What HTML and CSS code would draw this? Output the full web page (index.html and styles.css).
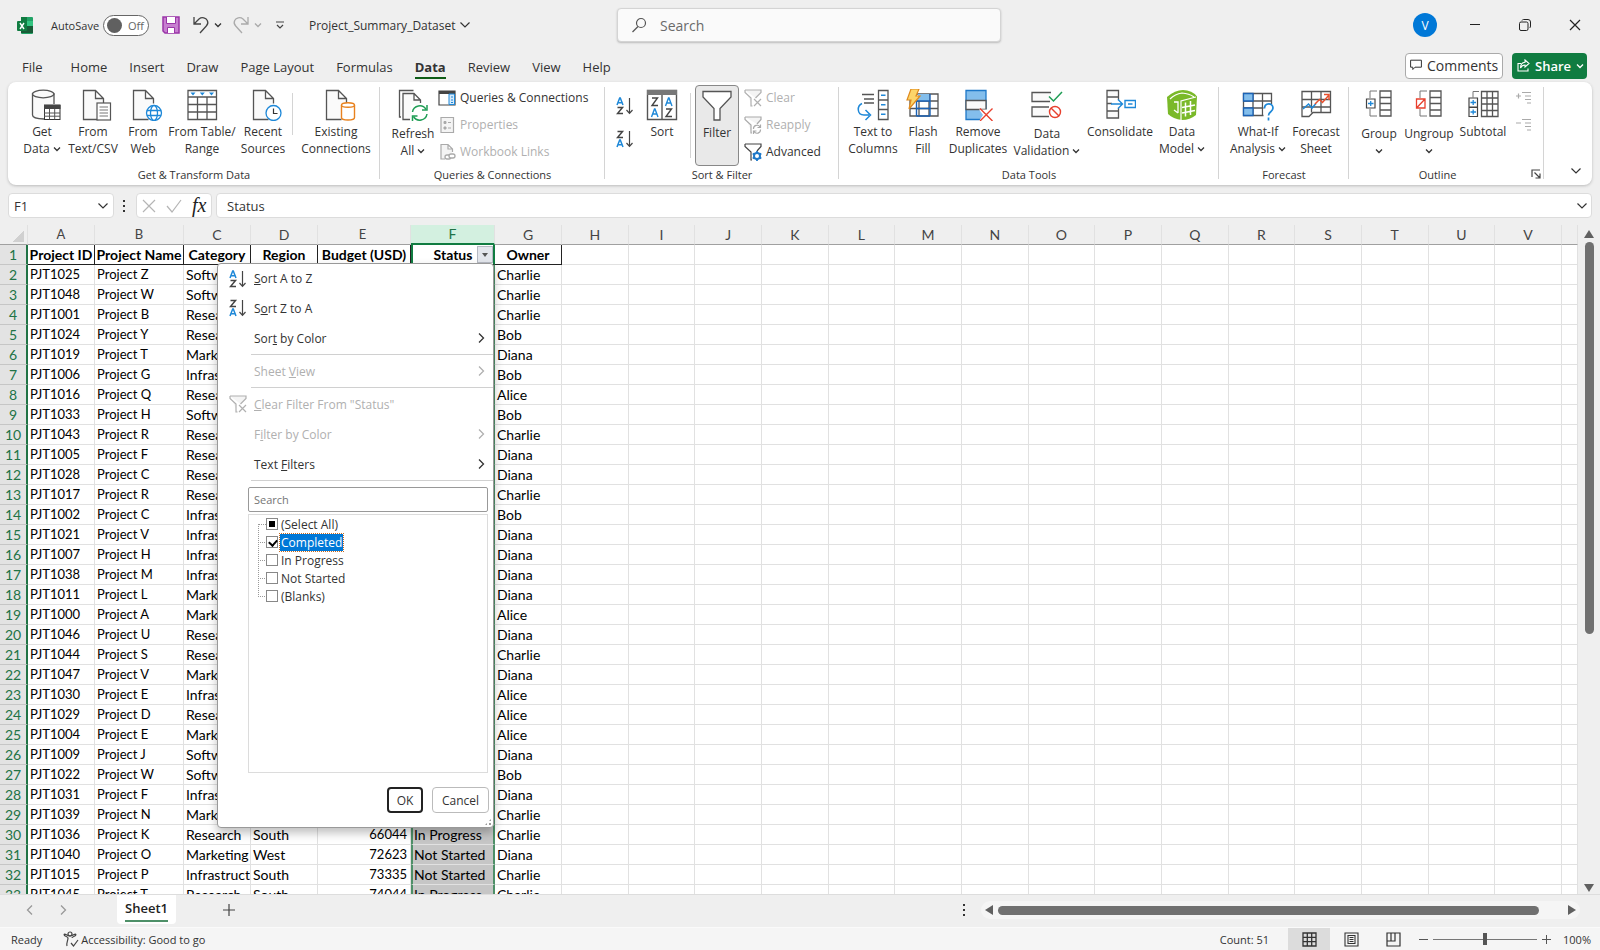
FILE: index.html
```
<!DOCTYPE html>
<html lang="en">
	<head>
		<meta charset="utf-8">
		<title>Project_Summary_Dataset</title>
		<link rel="stylesheet" href="styles.css">
	</head>
	<body>
		<svg class="defs" width="0" height="0">
			<symbol id="down" viewBox="0 0 8 8"><path d="M1 2.5l3 3 3-3" fill="none" stroke="currentColor" stroke-width="1.3"/></symbol>
			<symbol id="bigdown" viewBox="0 0 12 12"><path d="M1.5 3.5L6 8l4.5-4.5" fill="none" stroke="currentColor" stroke-width="1.2"/></symbol>
			<symbol id="right" viewBox="0 0 12 12"><path d="M4 1.5L8.5 6 4 10.5" fill="none" stroke="currentColor" stroke-width="1.3"/></symbol>
			<symbol id="az" viewBox="0 0 18 18"><g fill="none" stroke-width="1.5"><path d="M1 8L3.7 1h.6L7 8M2 5.7h4" stroke="#1e88d8"/><path d="M1.5 10.5H6.500L1.5 16.500H7" stroke="#444"/><path d="M13.5 1v15M10.5 13l3 3.3 3-3.3" stroke="#444" stroke-width="1.2"/></g></symbol>
			<symbol id="za" viewBox="0 0 18 18"><g fill="none" stroke-width="1.5"><path d="M1 17l2.7-7h.6L7 17M2 14.700h4" stroke="#1e88d8"/><path d="M1.5 1.5H6.500L1.5 7.5H7" stroke="#444"/><path d="M13.5 1v15M10.5 13l3 3.3 3-3.3" stroke="#444" stroke-width="1.2"/></g></symbol>
			<symbol id="unfilter" viewBox="0 0 18 18"><g fill="#f4f4f4" stroke="#b0b0b0" stroke-width="1.2"><path d="M1 1h16v2.5L11.5 9M8.5 17H7V9L1 3.5V1" /><path d="M10 10l7 7M17 10l-7 7"/></g></symbol>
			<symbol id="page" viewBox="0 0 32 32"><path d="M17.5 30.5h-15v-29h12l8 8v5M14.5 1.5v8h8" fill="#fafafa" stroke="#555" stroke-width="1.3"/></symbol>
		</svg>

		<header class="titlebar">
			<svg class="logo" width="16" height="17" viewBox="0 0 16 17"><rect x="4" width="12" height="17" rx="1" fill="#21a366"/><path d="M4 0h6v5H4z" fill="#107c41"/><path d="M10 4h6v5h-6z" fill="#33c481"/><path d="M4 9h12v7H4z" fill="#185c37"/><rect y="4" width="10" height="10" rx="1" fill="#107c41"/><path d="M3 6l4 6M7 6l-4 6" stroke="#fff" stroke-width="1.4"/></svg>
			<label class="autosave" for="autosave">AutoSave</label>
			<span class="toggle"><input type="checkbox" id="autosave"><span>Off</span></span>
			<button class="tool save" aria-label="Save"><svg width="18" height="18" viewBox="0 0 18 18"><path d="M1 1h16v16H3l-2-2z" fill="#c77fd0" stroke="#9a35a8" stroke-width="1.5"/><path d="M4.5 1v6.5h9V1" fill="#fff" stroke="#9a35a8"/><path d="M5.5 17v-5.5h7V17" fill="#fff" stroke="#9a35a8"/></svg></button>
			<button class="tool undo" aria-label="Undo"><svg width="18" height="18" viewBox="0 0 18 18"><path d="M2 1v7h7M2 8l5-5c3-2.5 7-1 8.3 1.5 1 2 .5 4-1 5.5L8 17" fill="none" stroke="#444" stroke-width="1.3"/></svg></button>
			<svg class="caret" width="8" height="8"><use href="#down"/></svg>
			<button class="tool redo" aria-label="Redo" disabled><svg width="18" height="18" viewBox="0 0 18 18"><path d="M16 1v7H9M16 8l-5-5C8 .5 4 2 2.7 4.500c-1 2-.5 4 1 5.5L10 17" fill="none" stroke="#aaa" stroke-width="1.3"/></svg></button>
			<svg class="caret dim" width="8" height="8"><use href="#down"/></svg>
			<button class="tool customize" aria-label="Customize toolbar"><svg width="10" height="10" viewBox="0 0 10 10"><path d="M1 2h8M2 5l3 3 3-3" fill="none" stroke="#444" stroke-width="1.2"/></svg></button>
			<button class="filename">Project_Summary_Dataset<svg width="12" height="12"><use href="#bigdown"/></svg></button>
			<div class="search">
				<svg width="16" height="16" viewBox="0 0 16 16"><g fill="none" stroke="#555" stroke-width="1.2"><circle cx="10" cy="6" r="4.5"/><path d="M7 9.5L1.5 15"/></g></svg>
				<input type="text" placeholder="Search" aria-label="Search">
			</div>
			<div class="window">
				<button class="avatar">V</button>
				<button aria-label="Minimize"><svg width="12" height="12"><path d="M1 5.5h10" stroke="#222"/></svg></button>
				<button aria-label="Restore"><svg width="12" height="12" viewBox="0 0 12 12"><g fill="none" stroke="#222"><rect x=".5" y="3" width="8.5" height="8.5" rx="1.5"/><path d="M3 1.5q.5-1 1.5-1H9q2.5 0 2.5 2.5v4q0 1.5-1 2"/></g></svg></button>
				<button aria-label="Close"><svg width="12" height="12"><path d="M1 1l10 10M11 1L1 11" stroke="#222" stroke-width="1.2"/></svg></button>
			</div>
		</header>

		<nav class="tabs">
			<a href="#">File</a>
			<a href="#">Home</a>
			<a href="#">Insert</a>
			<a href="#">Draw</a>
			<a href="#">Page Layout</a>
			<a href="#">Formulas</a>
			<a href="#" class="active">Data</a>
			<a href="#">Review</a>
			<a href="#">View</a>
			<a href="#">Help</a>
			<button class="comments"><svg width="12" height="12" viewBox="0 0 12 12"><path d="M.6 1.2h10.8v7H5L2.8 10.5V8.2H.6z" fill="none" stroke="#333"/></svg>Comments</button>
			<button class="share"><svg width="13" height="13" viewBox="0 0 13 13"><path d="M4 4.5H1v7.500h10V9.5M8 1l4 3.5L8 8V6C5.5 6 4.5 7 3.5 9c0-3.5 1.5-5.5 4.5-5.8z" fill="none" stroke="#fff" stroke-width="1.1"/></svg>Share<svg width="8" height="8"><use href="#down"/></svg></button>
		</nav>

		<section class="ribbon">
			<div class="group get">
				<div class="tools">
					<button class="big doc w50"><svg width="32" height="32" viewBox="0 0 32 32"><g fill="#fafafa" stroke="#555" stroke-width="1.3"><path d="M14 30c-7 0-11.500-1.500-11.500-4V5h21.500v10"/><ellipse cx="13.2" cy="5" rx="10.7" ry="3.8"/></g><rect x="14.5" y="16" width="15.5" height="14.5" fill="#fff" stroke="#333"/><path d="M14 16h16.500v4H14z" fill="#444"/><path d="M14 24h16M14 27.2h16M19.500 20v10.5M24.700 20v10.5" stroke="#555"/></svg><span>Get<br>Data <svg width="8" height="8"><use href="#down"/></svg></span></button>
					<button class="big doc w52"><svg width="32" height="32" viewBox="0 0 32 32"><use href="#page"/><rect x="16" y="14" width="13.5" height="17" fill="#fff" stroke="#555" stroke-width="1.2"/><path d="M18.5 18h8.5M18.5 21h8.5M18.5 24h8.5M18.5 27h8.5" stroke="#777"/></svg><span>From<br>Text/CSV</span></button>
					<button class="big doc w48"><svg width="32" height="32" viewBox="0 0 32 32"><use href="#page"/><g fill="#fff" stroke="#1e88d8" stroke-width="1.3"><circle cx="23" cy="24" r="7.5"/><ellipse cx="23" cy="24" rx="3.5" ry="7.5"/><path d="M16 21.5h14M16 26.5h14"/></g></svg><span>From<br>Web</span></button>
					<button class="big w70"><svg width="32" height="32" viewBox="0 0 32 32"><path d="M2 1.5h28.5v29H2zM2 8h28.5M2 15.5h28.5M2 23h28.5M11.5 8v22M21 8v22" fill="#fff" stroke="#555" stroke-width="1.3"/><path d="M4.5 3.5h5L7 6.5zM13.8 3.5h5l-2.5 3zM23 3.5h5l-2.5 3z" fill="#1e88d8"/></svg><span>From Table/<br>Range</span></button>
					<button class="big doc w52"><svg width="32" height="32" viewBox="0 0 32 32"><use href="#page"/><circle cx="22.5" cy="24" r="7.5" fill="#fff" stroke="#1e88d8" stroke-width="1.3"/><path d="M22.5 19.5V24.5h4" fill="none" stroke="#333" stroke-width="1.2"/></svg><span>Recent<br>Sources</span></button>
					<i class="divider"></i>
					<button class="big doc w78"><svg width="32" height="32" viewBox="0 0 32 32"><use href="#page"/><path d="M17.5 16v12.500c0 1.5 3 2.5 6.5 2.5s6.5-1 6.5-2.5V16" fill="#fff" stroke="#e8821e" stroke-width="1.4"/><ellipse cx="24" cy="16" rx="6.5" ry="2.3" fill="#fff" stroke="#e8821e" stroke-width="1.4"/></svg><span>Existing<br>Connections</span></button>
				</div>
				<p>Get &amp; Transform Data</p>
			</div>

			<div class="group queries">
				<div class="tools">
					<button class="big w50 low"><svg width="32" height="32" viewBox="0 0 32 32"><path d="M4 28H2.5V1.5h14" fill="none" stroke="#555" stroke-width="1.3"/><path d="M13 30.5H6V4.5h11l6.5 6.5v3M17 4.5V11h6.5" fill="#fafafa" stroke="#555" stroke-width="1.3"/><path d="M14 16h17v16H14z" fill="#fff"/><g fill="none" stroke="#1f9d55" stroke-width="1.5"><path d="M15.5 23a7.3 7.3 0 0 1 13.500-2.500M30 25a7.3 7.3 0 0 1-13.500 2.500"/><path d="M30 16v5h-5M15.5 32v-5h5"/></g></svg><span>Refresh<br>All <svg width="8" height="8"><use href="#down"/></svg></span></button>
					<div class="stack">
						<button><svg width="18" height="18" viewBox="0 0 18 18"><path d="M1 2h16v14H1z" fill="#fff" stroke="#444" stroke-width="1.2"/><path d="M1 2h16v3H1z" fill="#444"/><path d="M11 5h5.500v10.500H11z" fill="#d6eafa" stroke="#1e88d8"/><path d="M13 8h2M13 11h2M13 13.500h2" stroke="#1e88d8"/></svg>Queries &amp; Connections</button>
						<button disabled><svg width="18" height="18" viewBox="0 0 18 18"><path d="M3 1.500h12.500v15H3z" fill="#f4f4f4" stroke="#aaa" stroke-width="1.2"/><path d="M6 5.500h2v2h-2zM6 11h2v2h-2zM10 6.500h3M10 12h3" fill="#aaa" stroke="#aaa"/></svg>Properties</button>
						<button disabled><svg width="18" height="18" viewBox="0 0 18 18"><path d="M7 16H3V1.500h7l4.500 4.500v3M10 1.500V6h4.500" fill="#f4f4f4" stroke="#aaa" stroke-width="1.2"/><g fill="#fff" stroke="#aaa" stroke-width="1.3"><rect x="7" y="12" width="6" height="4" rx="2"/><rect x="11" y="11" width="6" height="4" rx="2"/></g></svg>Workbook Links</button>
					</div>
				</div>
				<p>Queries &amp; Connections</p>
			</div>

			<div class="group sort">
				<div class="tools">
					<div class="pair">
						<button aria-label="Sort A to Z"><svg width="18" height="18"><use href="#az"/></svg></button>
						<button aria-label="Sort Z to A"><svg width="18" height="18"><use href="#za"/></svg></button>
					</div>
					<button class="big w50"><svg width="32" height="32" viewBox="0 0 32 32"><path d="M1.5 1.5h29v29h-29zM16 5v25" fill="#fff" stroke="#555" stroke-width="1.4"/><path d="M1 1h30v5H1z" fill="#777"/><g fill="none" stroke-width="1.4"><path d="M6 9h5.500L6 16.500h6M20 20h5.500L20 27.500h6" stroke="#444"/><path d="M5.500 28l3-8h.5l3 8M6.500 25h4.500M19.500 17l3-8h.5l3 8M20.500 14H25" stroke="#1e88d8"/></g></svg><span>Sort</span></button>
					<i class="divider tall"></i>
					<button class="big w44 pressed"><svg width="32" height="32" viewBox="0 0 32 32"><path d="M2 1.500h28v5.500L19 18.500v11.500h-6V18.500L2 7z" fill="#fff" stroke="#555" stroke-width="1.3"/></svg><span>Filter</span></button>
					<div class="stack narrow">
						<button disabled><svg width="18" height="18"><use href="#unfilter"/></svg>Clear</button>
						<button disabled><svg width="18" height="18" viewBox="0 0 18 18"><g fill="#f4f4f4" stroke="#aaa" stroke-width="1.2"><path d="M1 1h16v2.500L13 8M8 17H7V9L1 3.500V1"/><path d="M9.500 13a3.500 3.500 0 0 1 6.500-2M16.500 13.500a3.500 3.500 0 0 1-6.500 2M16.500 8.500v3h-3M9.500 18v-3h3" fill="none"/></g></svg>Reapply</button>
						<button><svg width="18" height="18" viewBox="0 0 18 18"><path d="M1 1h16v2.500L13 8M8 17H7V9L1 3.500V1" fill="#fff" stroke="#444" stroke-width="1.2"/><circle cx="13" cy="13" r="3" fill="#fff" stroke="#1e78c8" stroke-width="2"/><path d="M13 8v2M13 16v2M8.700 10.500l1.700 1M15.600 14.500l1.700 1M8.700 15.500l1.700-1M15.600 11.500l1.700-1" stroke="#1e78c8" stroke-width="1.8"/></svg>Advanced</button>
					</div>
				</div>
				<p>Sort &amp; Filter</p>
			</div>

			<div class="group data">
				<div class="tools">
					<button class="big w52"><svg width="34" height="32" viewBox="0 0 34 32"><path d="M6 5.500h12M8 10h10M8 14h10" stroke="#555" stroke-width="1.3"/><path d="M22.500 1.500H32v29h-9.500zM22.500 11H32M22.500 20.500H32" fill="#fff" stroke="#555" stroke-width="1.3"/><path d="M25 6.200h4.500M25 15.700h4.500M25 25.200h4.500" stroke="#1e88d8" stroke-width="1.5"/><path d="M6 14.500C1 16.500.5 26 8 26h5M9.500 21l5 5-5 5" fill="none" stroke="#1e88d8" stroke-width="1.5"/></svg><span>Text to<br>Columns</span></button>
					<button class="big w48"><svg width="34" height="32" viewBox="0 0 34 32"><path d="M4 5h28v22H4zM4 12h28M4 19.500h28M13 5v22M23 5v22" fill="#fff" stroke="#555" stroke-width="1.3"/><path d="M12 5h11v7H12z" fill="#83beec"/><path d="M10.500 12H24M10.500 19.500H24M10.500 27H24M10.500 12v15M24 5v22" fill="none" stroke="#1b62b5" stroke-width="1.4"/><path d="M5 0h8l-3 7h4L3 20l2-9H1z" fill="#fcd56a" stroke="#e08a1e" stroke-width="1.2"/></svg><span>Flash<br>Fill</span></button>
					<button class="big w62"><svg width="32" height="32" viewBox="0 0 32 32"><path d="M4 1.500h20v29H4z" fill="#83beec" stroke="#1e78c8" stroke-width="1.3"/><path d="M4 11.500h20v9H4z" fill="#fafafa" stroke="#555" stroke-width="1.3"/><path d="M17 20.500h15V32H17l4-6z" fill="#fff"/><path d="M18 19.500l12.500 12.500M30.500 19.500L18 32" stroke="#e8402e" stroke-width="1.4"/></svg><span>Remove<br>Duplicates</span></button>
					<button class="big w76 low"><svg width="32" height="32" viewBox="0 -2 32 32"><path d="M20 1.500H1v9h18M18 16H1v9.500h17" fill="#fafafa" stroke="#555" stroke-width="1.3"/><path d="M18 5.500l4.500 4.500L31 1" fill="none" stroke="#1f9d55" stroke-width="1.5"/><g fill="#fff" stroke="#e8402e" stroke-width="1.4"><circle cx="24" cy="21" r="5.500"/><path d="M20 17l8 8"/></g></svg><span>Data<br>Validation <svg width="8" height="8"><use href="#down"/></svg></span></button>
					<button class="big w70"><svg width="32" height="32" viewBox="0 0 32 32"><path d="M3 1.500h11.500V8H3zM3 8v14M3 22h11.500v7H3zM14.500 11v-3M3 14.500h5M14.500 19v3" fill="#fafafa" stroke="#555" stroke-width="1.3"/><path d="M7 15h11M14 10.500l4.500 4.500-4.500 4.500M21 11.500h10.500v7H21zM24 15h4.500" fill="none" stroke="#1e88d8" stroke-width="1.4"/></svg><span>Consolidate</span></button>
					<button class="big w54"><svg width="32" height="32" viewBox="0 0 32 32"><path d="M1 8Q9 1 17 1q9 0 14 6.500L30 26q-6 5-14 5-9-1-14-6z" fill="#7ab929"/><path d="M4 10q5-5 12-6 7 .5 12 4M15 31V12l15-4" fill="none" stroke="#fff" stroke-width="1.2"/><path d="M19.500 13.500v14M24.500 12v14M16 18.500l13-2.500M16 24l13-2.500" stroke="#fff" stroke-width="1.5"/><path d="M8 13h4v11M8 21l4 3" fill="none" stroke="#fff" stroke-width="1.3"/></svg><span>Data<br>Model <svg width="8" height="8"><use href="#down"/></svg></span></button>
				</div>
				<p>Data Tools</p>
			</div>

			<div class="group forecast">
				<div class="tools">
					<button class="big w62"><svg width="32" height="32" viewBox="0 0 32 32"><path d="M1.500 4.500h28v22h-28zM1.500 12h28M1.500 19h28M11 4.500v22M20.500 4.500v22" fill="#fff" stroke="#555" stroke-width="1.3"/><path d="M1.500 4.500H11V12H1.500zM1.500 19H11v7.500H1.500z" fill="#83beec" stroke="#1b62b5" stroke-width="1.3"/><path d="M21.500 15h10v17h-10z" fill="#fff"/><path d="M22.500 19.500c0-6 8.500-6 8.500-.5 0 4-4.500 3.500-4.500 7.500M26.500 28.500v3" fill="none" stroke="#1e88d8" stroke-width="1.7"/></svg><span>What-If<br>Analysis <svg width="8" height="8"><use href="#down"/></svg></span></button>
					<button class="big w54"><svg width="32" height="32" viewBox="0 0 32 32"><path d="M2 2.500h28.500v21H13L9 27.500H2zM2 10.500h28.500M2 18h28.500M11.500 2.500v21M21 2.500v21" fill="#fff" stroke="#555" stroke-width="1.3"/><path d="M3 20l5.500-5 3.500 4 4-4.500" fill="none" stroke="#1e88d8" stroke-width="1.5"/><path d="M15 15l4.500-4.500 3 3L29 6M24 5.500h5V11" fill="none" stroke="#e8502e" stroke-width="1.5"/></svg><span>Forecast<br>Sheet</span></button>
				</div>
				<p>Forecast</p>
			</div>

			<div class="group outline">
				<div class="tools">
					<button class="big w50 low"><svg width="28" height="32" viewBox="0 -1 28 32"><path d="M12 1H5v7M12 26H5v-7" fill="none" stroke="#777"/><path d="M15 1h11v25H15zM15 7.500h11M15 13.500h11M15 20h11" fill="#fff" stroke="#555" stroke-width="1.3"/><path d="M1.500 9h8.500v9H1.500z" fill="#fff" stroke="#444" stroke-width="1.2"/><path d="M3 13.500h5.500M5.700 11v5" stroke="#1e88d8" stroke-width="1.3"/></svg><span>Group<br><svg width="8" height="8"><use href="#down"/></svg></span></button>
					<button class="big w50 low"><svg width="28" height="32" viewBox="0 -1 28 32"><path d="M12 1H5v7M12 26H5v-7" fill="none" stroke="#777"/><path d="M15 1h11v25H15zM15 7.500h11M15 13.500h11M15 20h11" fill="#fff" stroke="#555" stroke-width="1.3"/><path d="M1.500 9h8.500v9H1.500zM1.500 18L10 9" fill="#fff" stroke="#e8402e" stroke-width="1.3"/></svg><span>Ungroup<br><svg width="8" height="8"><use href="#down"/></svg></span></button>
					<button class="big w58"><svg width="32" height="32" viewBox="0 0 32 32"><path d="M12 2.500H6v6" fill="none" stroke="#777"/><path d="M14.500 2.500h16.500v25H14.500zM14.500 9H31M14.500 15H31M14.500 21.500H31M20 2.500v25M25.500 2.500v25" fill="#fff" stroke="#555" stroke-width="1.3"/><path d="M2 9h8.500v9H2zM2 18.500h8.500v9H2z" fill="#fff" stroke="#444" stroke-width="1.2"/><path d="M3.500 13.500h5.500M6.200 11v5M3.500 23h5.500M6.200 20.500v5" stroke="#1e88d8" stroke-width="1.3"/></svg><span>Subtotal</span></button>
					<div class="pair details">
						<button disabled aria-label="Show Detail"><svg width="18" height="14"><path d="M1 5h5M3.500 2.500v5M7 1.500h9M10 5h6M10 8.500h6M12 12h4" stroke="#aaa" stroke-width="1.2"/></svg></button>
						<button disabled aria-label="Hide Detail"><svg width="18" height="14"><path d="M1 5h5M7 1.500h9M10 5h6M10 8.500h6M12 12h4" stroke="#aaa" stroke-width="1.2"/></svg></button>
					</div>
				</div>
				<p>Outline</p>
				<button class="launcher" aria-label="Outline settings"><svg width="10" height="10"><path d="M1 8V1h8M3.500 3.500l5 5M9 4.500V9H4.500" fill="none" stroke="#444" stroke-width="1.2"/></svg></button>
			</div>
			<button class="collapse" aria-label="Collapse ribbon"><svg width="12" height="12"><use href="#bigdown"/></svg></button>
		</section>

		<section class="formula">
			<div class="namebox"><input type="text" value="F1" aria-label="Name box"><svg width="12" height="12"><use href="#bigdown"/></svg></div>
			<i class="dots"></i>
			<div class="fx">
				<svg width="14" height="14"><path d="M1 1l12 12M13 1L1 13" stroke="#b5b5b5" stroke-width="1.2"/></svg>
				<svg width="16" height="14"><path d="M1 7l5 6 9-12" fill="none" stroke="#b5b5b5" stroke-width="1.2"/></svg>
				<em>fx</em>
			</div>
			<div class="content"><input type="text" value="Status" aria-label="Formula"><svg width="12" height="12"><use href="#bigdown"/></svg></div>
		</section>

		<main class="sheet">
			<div class="grid">
				<table>
					<colgroup>
						<col class="c-num"><col class="c-id"><col class="c-name"><col class="c-cat"><col class="c-cat"><col class="c-budget"><col class="c-status"><col class="c-owner">
						<col span="15"><col class="c-rest">
					</colgroup>
					<thead><tr id="letters"></tr></thead>
					<tbody id="rows"></tbody>
				</table>
			</div>
			<form class="menu">
				<button type="button"><svg width="18" height="18"><use href="#az"/></svg><span><u>S</u>ort A to Z</span></button>
				<button type="button"><svg width="18" height="18"><use href="#za"/></svg><span>S<u>o</u>rt Z to A</span></button>
				<button type="button"><span>Sor<u>t</u> by Color</span><svg class="more" width="12" height="12"><use href="#right"/></svg></button>
				<hr>
				<button type="button" disabled><span>Sheet <u>V</u>iew</span><svg class="more" width="12" height="12"><use href="#right"/></svg></button>
				<hr>
				<button type="button" disabled><svg width="18" height="18"><use href="#unfilter"/></svg><span><u>C</u>lear Filter From "Status"</span></button>
				<button type="button" disabled><span>F<u>i</u>lter by Color</span><svg class="more" width="12" height="12"><use href="#right"/></svg></button>
				<button type="button"><span>Text <u>F</u>ilters</span><svg class="more" width="12" height="12"><use href="#right"/></svg></button>
				<hr>
				<input class="find" type="text" placeholder="Search" aria-label="Search values">
				<div class="values">
					<label><input type="checkbox" class="some"><span>(Select All)</span></label>
					<label class="current"><input type="checkbox" checked><span>Completed</span></label>
					<label><input type="checkbox"><span>In Progress</span></label>
					<label><input type="checkbox"><span>Not Started</span></label>
					<label><input type="checkbox"><span>(Blanks)</span></label>
				</div>
				<div class="actions">
					<button type="button" class="ok">OK</button>
					<button type="button">Cancel</button>
				</div>
				<i class="grip"></i>
			</form>
			<div class="vscroll"><i class="up"></i><i class="thumb"></i><i class="down"></i></div>
		</main>

		<section class="sheets">
			<button class="prev" aria-label="Previous sheet"><svg width="12" height="12"><use href="#right"/></svg></button>
			<button aria-label="Next sheet"><svg width="12" height="12"><use href="#right"/></svg></button>
			<a href="#" class="tab"><span>Sheet1</span></a>
			<button class="add" aria-label="New sheet"><svg width="14" height="14"><path d="M1 7h12M7 1v12" stroke="#444" stroke-width="1.2"/></svg></button>
			<i class="dots"></i>
			<div class="hscroll"><i class="left"></i><i class="thumb"></i><i class="right"></i></div>
		</section>

		<footer class="status">
			<span>Ready</span>
			<span class="access"><svg width="16" height="16" viewBox="0 0 16 16"><g fill="none" stroke="#444" stroke-width="1.2"><circle cx="7" cy="3" r="2"/><path d="M1 3.500c0 2 4 2 4 3.500 0 3-2 5-1 8M13 3.500c0 2-4 2-4 3.500M1 3.500C2 2 4 5 7 5s5-3 6-1.500M8 12l2.500 3L15 9"/></g></svg>Accessibility: Good to go</span>
			<span class="count">Count: 51</span>
			<button class="view on" aria-label="Normal"><svg width="15" height="15"><path d="M1 1h13v13H1zM1 5.300h13M1 9.700h13M5.300 1v13M9.700 1v13" fill="none" stroke="#333" stroke-width="1.3"/></svg></button>
			<button class="view" aria-label="Page Layout"><svg width="15" height="15"><path d="M1 1h13v13H1zM4 3.500h7v8H4zM5.500 5.500h4M5.500 7.500h4M5.500 9.500h4" fill="none" stroke="#333" stroke-width="1.1"/></svg></button>
			<button class="view" aria-label="Page Break Preview"><svg width="15" height="15"><path d="M1 1h13v13H1zM1 9h8V1M5 1v8" fill="none" stroke="#333" stroke-width="1.2"/></svg></button>
			<button class="zoom" aria-label="Zoom out"><svg width="9" height="9"><path d="M0 4.500h9" stroke="#555"/></svg></button>
			<input type="range" min="0" max="100" value="50" aria-label="Zoom">
			<button class="zoom" aria-label="Zoom in"><svg width="9" height="9"><path d="M0 4.500h9M4.500 0v9" stroke="#555"/></svg></button>
			<span class="percent">100%</span>
		</footer>

		<script type="text/javascript">
			var letters = "ABCDEFGHIJKLMNOPQRSTUV";
			var heads = ["Project ID", "Project Name", "Category", "Region", "Budget (USD)", "Status", "Owner"];
			// id, name, category, region, budget, status, owner
			var data = [
				["1025", "Z", "Software", "", "", "", "Charlie"],
				["1048", "W", "Software", "", "", "", "Charlie"],
				["1001", "B", "Research", "", "", "", "Charlie"],
				["1024", "Y", "Research", "", "", "", "Bob"],
				["1019", "T", "Marketing", "", "", "", "Diana"],
				["1006", "G", "Infrastructure", "", "", "", "Bob"],
				["1016", "Q", "Research", "", "", "", "Alice"],
				["1033", "H", "Software", "", "", "", "Bob"],
				["1043", "R", "Research", "", "", "", "Charlie"],
				["1005", "F", "Research", "", "", "", "Diana"],
				["1028", "C", "Research", "", "", "", "Diana"],
				["1017", "R", "Research", "", "", "", "Charlie"],
				["1002", "C", "Infrastructure", "", "", "", "Bob"],
				["1021", "V", "Infrastructure", "", "", "", "Diana"],
				["1007", "H", "Infrastructure", "", "", "", "Diana"],
				["1038", "M", "Infrastructure", "", "", "", "Diana"],
				["1011", "L", "Marketing", "", "", "", "Diana"],
				["1000", "A", "Marketing", "", "", "", "Alice"],
				["1046", "U", "Research", "", "", "", "Diana"],
				["1044", "S", "Research", "", "", "", "Charlie"],
				["1047", "V", "Marketing", "", "", "", "Diana"],
				["1030", "E", "Infrastructure", "", "", "", "Alice"],
				["1029", "D", "Research", "", "", "", "Alice"],
				["1004", "E", "Marketing", "", "", "", "Alice"],
				["1009", "J", "Software", "", "", "", "Diana"],
				["1022", "W", "Software", "", "", "", "Bob"],
				["1031", "F", "Infrastructure", "", "", "", "Diana"],
				["1039", "N", "Marketing", "", "", "", "Charlie"],
				["1036", "K", "Research", "South", "66044", "In Progress", "Charlie"],
				["1040", "O", "Marketing", "West", "72623", "Not Started", "Diana"],
				["1015", "P", "Infrastructure", "South", "73335", "Not Started", "Charlie"],
				["1045", "T", "Research", "South", "74044", "In Progress", "Charlie"]
			];
			var classes = ["code", "code", "", "", "num", "sel"];

			function cells(values, tag){
				var html = "";
				for(var i = 0; i < 23; i++){
					html += "<" + tag + " class='" + (classes[i] || "") + "'>" + (values[i] || "") + "</" + tag + ">";
				}
				return html;
			}

			function init(){
				document.querySelector("#letters").innerHTML = "<th class='corner'></th>" + cells(letters.split(""), "th");
				var html = "<tr class='heads'><th>1</th>" + cells(heads, "td") + "</tr>";
				data.forEach(function(row, i){
					var values = ["PJT" + row[0], "Project " + row[1]].concat(row.slice(2));
					html += "<tr><th>" + (i + 2) + "</th>" + cells(values, "td") + "</tr>";
				});
				document.querySelector("#rows").innerHTML = html;
				document.querySelector(".heads .sel").innerHTML += "<button class='drop' aria-label='Filter Status'></button>";
				document.querySelector(".some").indeterminate = true;
			}

			init();
		</script>
	</body>
</html>
```

FILE: styles.css
```
*{
	margin: 0px;
	padding: 0px;
	box-sizing: border-box;
}
body{
	height: 100vh;
	display: flex;
	flex-direction: column;
	overflow: hidden;
	background: #efefef;
	color: #333;
	font-family: "Open Sans", "Noto Sans", sans-serif;
	font-size: 12px;
}
button, input{
	font: inherit;
	color: inherit;
	background: none;
	border: none;
	outline: none;
}
a{
	color: inherit;
	text-decoration: none;
}
svg{
	flex: none;
}
.defs{
	position: absolute;
}

/* title bar */
.titlebar{
	height: 50px;
	flex: none;
	display: flex;
	align-items: center;
	padding-left: 17px;
	position: relative;
}
.autosave{
	margin-left: 18px;
	width: 52px;
	font-size: 11px;
}
.toggle{
	width: 46px;
	height: 21px;
	border: 1px solid #666;
	border-radius: 11px;
	background: #fff;
	display: flex;
	align-items: center;
	gap: 6px;
	padding-left: 3px;
	font-size: 11px;
	color: #666;
}
.toggle input{
	appearance: none;
	width: 15px;
	height: 15px;
	border-radius: 50%;
	background: #606060;
}
.tool{
	display: flex;
}
.save{
	margin-left: 13px;
}
.undo{
	margin-left: 12px;
}
.caret{
	margin-left: 4px;
}
.dim{
	color: #aaa;
}
.redo{
	margin-left: 10px;
}
.customize{
	margin-left: 13px;
}
.filename{
	margin-left: 24px;
	display: flex;
	align-items: center;
	gap: 4px;
}
.search{
	position: absolute;
	left: 50%;
	top: 8px;
	width: 384px;
	height: 34px;
	margin-left: -183px;
	display: flex;
	align-items: center;
	gap: 13px;
	padding-left: 13px;
	background: #fafafa;
	border: 1px solid #d4d4d4;
	border-radius: 4px;
	box-shadow: 0px 1px 2px #bbb;
	font-size: 14px;
}
.search input::placeholder{
	color: #6a6a6a;
}
.window{
	margin-left: auto;
	display: flex;
	align-items: center;
	gap: 38px;
	padding-right: 19px;
}
.window button{
	display: flex;
}
.window .avatar{
	width: 24px;
	height: 24px;
	border-radius: 50%;
	justify-content: center;
	align-items: center;
	background: #0078d7;
	color: #fff;
	margin-right: -6px;
}

/* tabs */
.tabs{
	height: 32px;
	flex: none;
	display: flex;
	align-items: center;
	gap: 22px;
	padding: 0px 13px 0px 22px;
	font-size: 13px;
}
.tabs a{
	height: 26px;
	line-height: 28px;
}
.tabs a:first-child{
	margin-right: 6px;
}
.tabs .active{
	font-weight: bold;
	border-bottom: 2px solid #0e5c16;
}
.comments, .share{
	height: 26px;
	display: flex;
	align-items: center;
	gap: 5px;
	border-radius: 4px;
}
.comments{
	margin-left: auto;
	width: 98px;
	padding: 0px 0px 2px 4px;
	background: #fff;
	border: 1px solid #aaa;
	font-size: 14px;
}
.share{
	width: 75px;
	margin-left: -13px;
	padding: 0px 0px 1px 5px;
	background: #107c41;
	color: #fff;
	font-weight: 600;
}

/* ribbon */
.ribbon{
	height: 103px;
	flex: none;
	margin: 0px 8px;
	display: flex;
	background: #fff;
	border-radius: 8px;
	box-shadow: 0px 1px 3px #bbb;
	position: relative;
}
.group{
	position: relative;
	display: flex;
	flex-direction: column;
}
.group::after{
	content: "";
	position: absolute;
	right: 0px;
	top: 5px;
	bottom: 6px;
	width: 1px;
	background: #d4d4d4;
}
.group p{
	text-align: center;
	font-size: 11px;
	line-height: 15px;
}
.tools{
	height: 85px;
	display: flex;
	padding-left: 8px;
}
.get{
	width: 372px;
}
.get .tools{
	padding-left: 9px;
}
.queries{
	width: 225px;
}
.sort{
	width: 234px;
}
.data{
	width: 380px;
}
.forecast{
	width: 130px;
}
.outline{
	width: 195px;
}
.outline .tools{
	padding-left: 5px;
}
.outline p{
	padding-right: 18px;
}
.big{
	height: 81px;
	margin-top: 3px;
	padding-top: 4px;
	display: flex;
	flex-direction: column;
	align-items: center;
	gap: 2px;
	line-height: 17px;
	white-space: nowrap;
}
.doc > svg{
	margin-left: 8px;
}
.low{
	gap: 4px;
}
.pressed{
	background: #e9e9e9;
	border: 1px solid #888;
	border-radius: 4px;
}
.w44{width: 44px;}
.w48{width: 48px;}
.w50{width: 50px;}
.w52{width: 52px;}
.w54{width: 54px;}
.w58{width: 58px;}
.w62{width: 62px;}
.w70{width: 70px;}
.w76{width: 76px;}
.w78{width: 78px;}
.divider{
	width: 1px;
	height: 42px;
	margin: 11px 4px 0px 3px;
	background: #d4d4d4;
}
.tall{
	height: 65px;
}
.stack{
	padding-top: 2px;
	display: flex;
	flex-direction: column;
}
.stack button{
	height: 27px;
	display: flex;
	align-items: center;
	gap: 4px;
	white-space: nowrap;
}
button:disabled{
	color: #b0b0b0;
}
.narrow{
	padding-left: 5px;
}
.pair{
	width: 24px;
	padding-top: 15px;
	display: flex;
	flex-direction: column;
	gap: 15px;
}
.pair button{
	height: 18px;
}
.details{
	padding-top: 9px;
	gap: 9px;
}
.launcher{
	position: absolute;
	right: 3px;
	bottom: 2px;
}
.collapse{
	position: absolute;
	right: 10px;
	bottom: 4px;
}

/* formula bar */
.formula{
	height: 40px;
	flex: none;
	padding: 8px 8px 7px;
	display: flex;
	font-size: 13px;
}
.formula div{
	display: flex;
	align-items: center;
	background: #fff;
	border: 1px solid #dcdcdc;
	border-radius: 4px;
}
.formula input{
	flex: 1;
	min-width: 0px;
}
.formula .namebox{
	width: 106px;
	padding: 0px 4px 0px 5px;
}
.dots{
	width: 2px;
	height: 12px;
	align-self: center;
	background: repeating-linear-gradient(#333 0px, #333 2px, transparent 2px, transparent 5px);
}
.formula .dots{
	margin: 0px 11px 0px 9px;
}
.formula .fx{
	width: 76px;
	padding-left: 5px;
	gap: 10px;
	margin-right: 4px;
}
.fx em{
	font: italic 20px "Liberation Serif", serif;
	color: #222;
}
.formula .content{
	flex: 1;
	padding: 0px 3px 0px 10px;
}

/* sheet */
.sheet{
	flex: 1;
	min-height: 0px;
	display: flex;
	position: relative;
}
.grid{
	flex: 1;
	overflow: hidden;
	background: #fff;
}
.grid table{
	width: 100%;
	table-layout: fixed;
	border-collapse: separate;
	border-spacing: 0px;
	font-family: Lato, sans-serif;
	font-size: 14px;
	color: #000;
}
.c-num{width: 28px;}
.c-id{width: 67px;}
.c-name{width: 89px;}
.c-cat{width: 67px;}
.c-budget{width: 93px;}
.c-status{width: 84px;}
.c-owner{width: 67px;}
.c-rest{width: 16px;}
.grid td, .grid th{
	height: 20px;
	line-height: 19px;
	overflow: hidden;
	white-space: nowrap;
	font-weight: normal;
	border-right: 1px solid #e1e1e1;
	border-bottom: 1px solid #e1e1e1;
}
.grid td{
	padding-left: 2px;
}
.grid thead th{
	background: #efefef;
	border-bottom: 1px solid #a0a0a0;
	color: #444;
}
.grid thead .corner{
	background: linear-gradient(135deg, transparent 50%, #d0d0d0 50%) 12px 5px / 12px 12px no-repeat #efefef;
}
.grid thead .sel{
	line-height: 18px;
	background: #d3f0e0;
	color: #217346;
	border-bottom: 2px solid #107c41;
}
.grid tbody th{
	background: #e3e3e3;
	color: #217346;
	border-bottom: 1px solid #c6c6c6;
	border-right: 2px solid #217346;
}
.grid .code, .grid .num{
	font-size: 13px;
}
.grid .num{
	text-align: right;
	padding-right: 3px;
}
.grid thead .num{
	text-align: center;
}
.grid td.sel{
	background: #c6c6c6;
	border-left: 2px solid #4e9068;
	border-right: 2px solid #4e9068;
	padding-left: 1px;
}
.grid .heads td{
	padding: 0px;
	text-align: center;
	font-size: 14px;
	font-weight: bold;
}
.grid .heads td:nth-child(-n+8){
	border-right: 1px solid #222;
	border-bottom: 1px solid #222;
}
.grid .heads td.sel{
	position: relative;
	background: #fff;
	border-left: 2px solid #107c41;
	border-right: 2px solid #107c41;
}
.drop{
	position: absolute;
	right: 0px;
	top: 1px;
	width: 16px;
	height: 17px;
	background: #e3e6ec;
	border: 1px solid #b5b9c2;
}
.drop::after{
	content: "";
	position: absolute;
	left: 4px;
	top: 6px;
	border: 3px solid transparent;
	border-top: 4px solid #555;
}

/* filter menu */
.menu{
	position: absolute;
	left: 217px;
	top: 38px;
	width: 277px;
	height: 565px;
	display: flex;
	flex-direction: column;
	background: #fff;
	border: 1px solid #999;
	border-radius: 4px;
	box-shadow: 0px 5px 10px #00000040;
}
.menu > button{
	height: 30px;
	display: flex;
	align-items: center;
	padding-left: 36px;
	text-align: left;
}
.menu > button:first-child{
	height: 29px;
}
.menu > button > svg:first-child{
	margin-left: -25px;
	margin-right: 7px;
}
.more{
	margin-left: auto;
	margin-right: 6px;
}
.menu hr{
	border: none;
	border-top: 1px solid #d0d0d0;
	margin: 1px 0px 1px 33px;
}
.find{
	height: 25px;
	flex: none;
	margin: 5px 5px 2px 30px;
	padding-left: 5px;
	border: 1px solid #999;
	border-radius: 2px;
	font-size: 11px;
}
.values{
	flex: 1;
	margin: 0px 5px 0px 30px;
	padding-left: 9px;
	border: 1px solid #dcdcdc;
}
.values label{
	height: 18px;
	display: flex;
	align-items: center;
	position: relative;
	padding-left: 8px;
}
/* dotted tree lines */
.values label::before{
	content: "";
	position: absolute;
	left: 0px;
	top: -9px;
	width: 8px;
	height: 18px;
	border-left: 1px dotted #999;
	border-bottom: 1px dotted #999;
}
.values label:first-child::before{
	border-left: none;
}
.values input{
	appearance: none;
	width: 12px;
	height: 12px;
	border: 1px solid #888;
	background: #fff;
	position: relative;
}
.values input:indeterminate{
	background: #000;
	box-shadow: inset 0px 0px 0px 2px #fff;
}
.values input:checked::after{
	content: "";
	position: absolute;
	left: 3px;
	top: 1px;
	width: 4px;
	height: 6px;
	border-right: 2px solid #000;
	border-bottom: 2px solid #000;
	transform: rotate(42deg);
}
.values span{
	margin-left: 2px;
	padding: 0px 1px;
	line-height: 17px;
}
.current span{
	background: #0078d7;
	color: #fff;
	outline: 1px dotted #c66a20;
}
.actions{
	height: 54px;
	display: flex;
	justify-content: flex-end;
	align-items: center;
	gap: 9px;
	padding-right: 4px;
}
.actions button{
	width: 57px;
	height: 26px;
	background: #fff;
	border: 1px solid #bbb;
	border-radius: 4px;
}
.actions .ok{
	width: 36px;
	border: 2px solid #222;
}
.grip{
	position: absolute;
	right: 1px;
	bottom: 1px;
	width: 8px;
	height: 8px;
	background: radial-gradient(#999 1px, transparent 1px) 0px 0px / 4px 4px;
	clip-path: polygon(100% 0px, 100% 100%, 0px 100%);
}

/* scroll bars */
.vscroll{
	width: 22px;
	padding: 5px 0px 2px;
	display: flex;
	flex-direction: column;
	align-items: center;
}
.vscroll .thumb{
	width: 9px;
	height: 392px;
	margin: 4px 0px auto;
	border-radius: 5px;
	background: #707070;
}
.up{
	border: 5px solid transparent;
	border-top: none;
	border-bottom: 8px solid #606060;
}
.down{
	border: 5px solid transparent;
	border-bottom: none;
	border-top: 8px solid #606060;
}
.sheets{
	height: 33px;
	flex: none;
	display: flex;
	align-items: center;
	padding: 0px 20px 2px 24px;
	border-top: 1px solid #ddd;
	color: #999;
}
.sheets button{
	display: flex;
}
.prev{
	transform: scaleX(-1);
	margin-right: 21px;
}
.tab{
	align-self: flex-start;
	height: 29px;
	margin: 0px 46px 0px 48px;
	padding: 0px 8px;
	background: #fff;
	border-radius: 0px 0px 4px 4px;
	color: #222;
	font-size: 13px;
	font-weight: 600;
}
.tab span{
	display: block;
	height: 27px;
	line-height: 26px;
	border-bottom: 2px solid #4e9068;
}
.sheets .dots{
	margin-left: auto;
	margin-right: 16px;
}
.hscroll{
	width: 599px;
	height: 18px;
	display: flex;
	align-items: center;
	padding: 0px 4px;
	background: #f5f5f5;
	border-radius: 9px;
}
.hscroll .thumb{
	width: 541px;
	height: 9px;
	margin: 0px auto 0px 5px;
	border-radius: 5px;
	background: #707070;
}
.left{
	border: 5px solid transparent;
	border-left: none;
	border-right: 8px solid #606060;
}
.right{
	border: 5px solid transparent;
	border-right: none;
	border-left: 8px solid #606060;
}

/* status bar */
.status{
	height: 23px;
	flex: none;
	display: flex;
	align-items: center;
	padding: 0px 9px 0px 11px;
	background: #f5f5f5;
	border-top: 1px solid #fafafa;
	font-size: 11px;
}
.access{
	display: flex;
	align-items: center;
	gap: 2px;
	margin-left: 21px;
}
.count{
	margin-left: auto;
	margin-right: 19px;
}
.view{
	width: 42px;
	height: 22px;
	display: flex;
	align-items: center;
	justify-content: center;
}
.on{
	background: #dcdcdc;
}
.zoom{
	display: flex;
	margin-left: 5px;
}
.status input{
	appearance: none;
	width: 104px;
	height: 12px;
	margin-left: 5px;
	background: linear-gradient(#777, #777) center / 100% 1px no-repeat;
}
.status input::-webkit-slider-thumb{
	appearance: none;
	width: 4px;
	height: 12px;
	background: #555;
}
.percent{
	margin-left: 12px;
}
```
